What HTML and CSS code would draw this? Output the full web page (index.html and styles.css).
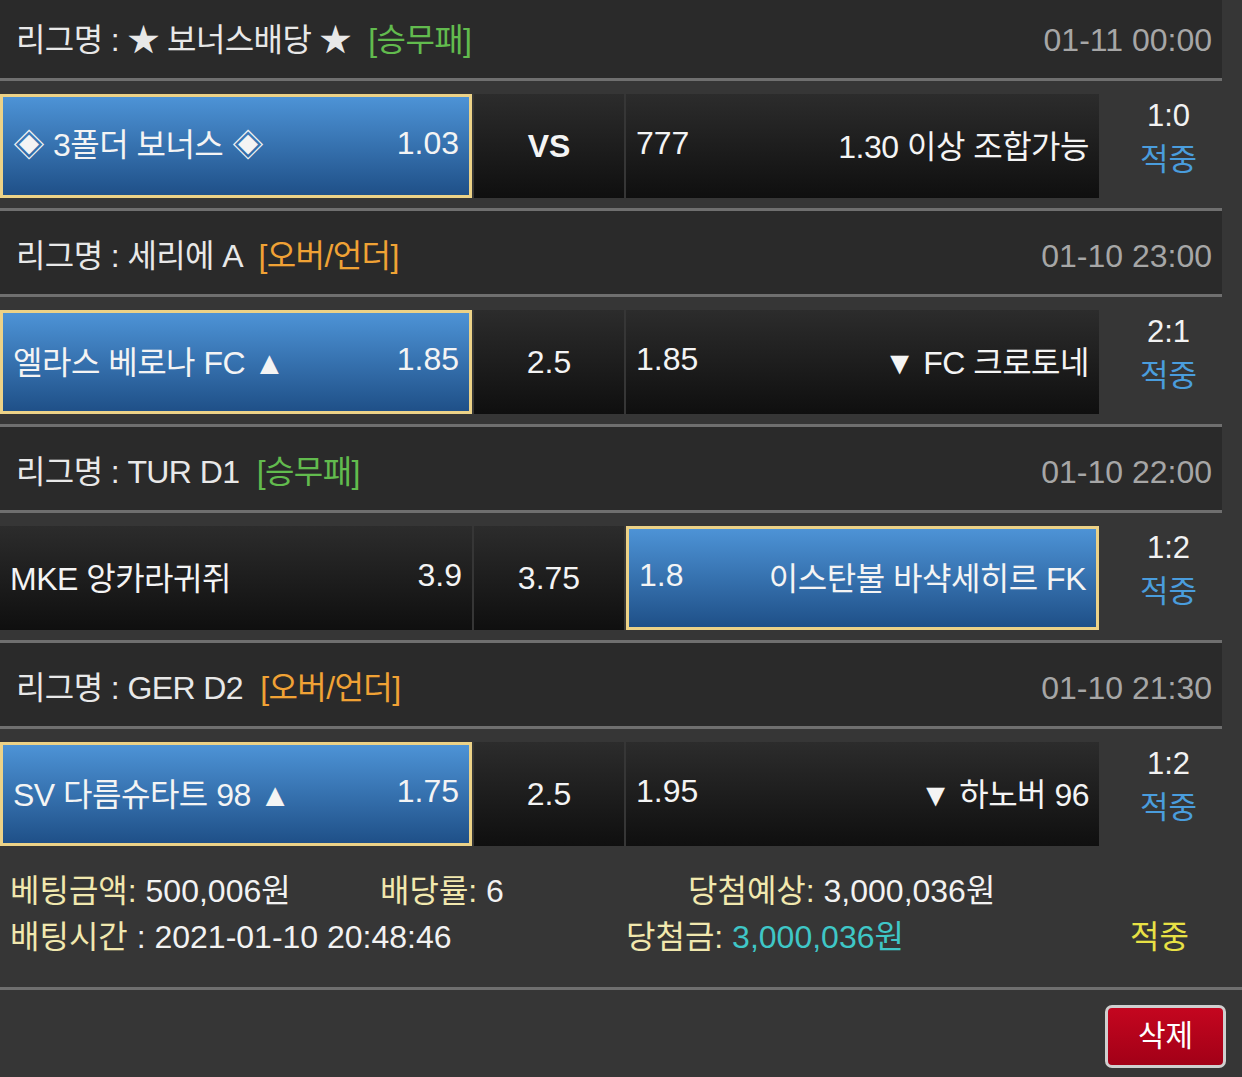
FILE: index.html
```html
<!DOCTYPE html>
<html lang="ko">
<head>
    <meta charset="UTF-8">
    <meta name="viewport" content="width=device-width, initial-scale=1.0">
    <title>배팅내역</title>
    <link rel="stylesheet" href="styles.css">
</head>
<body>
    <div class="bet-list">
        <!-- 보너스 -->
        <div class="league">
            <div class="league-name">리그명 : ★ 보너스배당 ★ <span class="tag green">[승무패]</span></div>
            <div class="league-time">01-11 00:00</div>
        </div>
        <div class="match">
            <div class="pick selected"><span class="team">◈ 3폴더 보너스 ◈</span><span>1.03</span></div>
            <div class="pick draw"><b>VS</b></div>
            <div class="pick"><span>777</span><span class="team">1.30 이상 조합가능</span></div>
            <div class="result"><div>1:0</div><div class="hit">적중</div></div>
        </div>

        <!-- 세리에 A -->
        <div class="league">
            <div class="league-name">리그명 : 세리에 A <span class="tag orange">[오버/언더]</span></div>
            <div class="league-time">01-10 23:00</div>
        </div>
        <div class="match">
            <div class="pick selected"><span class="team">엘라스 베로나 FC ▲</span><span>1.85</span></div>
            <div class="pick draw">2.5</div>
            <div class="pick"><span>1.85</span><span class="team">▼ FC 크로토네</span></div>
            <div class="result"><div>2:1</div><div class="hit">적중</div></div>
        </div>

        <!-- TUR D1 -->
        <div class="league">
            <div class="league-name">리그명 : TUR D1 <span class="tag green">[승무패]</span></div>
            <div class="league-time">01-10 22:00</div>
        </div>
        <div class="match">
            <div class="pick"><span class="team">MKE 앙카라귀쥐</span><span>3.9</span></div>
            <div class="pick draw">3.75</div>
            <div class="pick selected"><span>1.8</span><span class="team">이스탄불 바샥세히르 FK</span></div>
            <div class="result"><div>1:2</div><div class="hit">적중</div></div>
        </div>

        <!-- GER D2 -->
        <div class="league">
            <div class="league-name">리그명 : GER D2 <span class="tag orange">[오버/언더]</span></div>
            <div class="league-time">01-10 21:30</div>
        </div>
        <div class="match last">
            <div class="pick selected"><span class="team">SV 다름슈타트 98 ▲</span><span>1.75</span></div>
            <div class="pick draw">2.5</div>
            <div class="pick"><span>1.95</span><span class="team">▼ 하노버 96</span></div>
            <div class="result"><div>1:2</div><div class="hit">적중</div></div>
        </div>
    </div>

    <div class="summary">
        <div class="summary-row">
            <div class="col-amount"><span class="label">베팅금액:</span> 500,006원</div>
            <div class="col-rate"><span class="label">배당률:</span> 6</div>
            <div><span class="label">당첨예상:</span> 3,000,036원</div>
        </div>
        <div class="summary-row">
            <div class="col-time"><span class="label">배팅시간</span> : 2021-01-10 20:48:46</div>
            <div class="col-win"><span class="label">당첨금:</span> <span class="win-amount">3,000,036원</span></div>
            <div class="status">적중</div>
        </div>
    </div>

    <div class="actions">
        <button class="btn-delete">삭제</button>
    </div>
</body>
</html>
```

FILE: styles.css
```css
body {
    font-family: "Liberation Sans", "Noto Sans CJK KR", sans-serif;
    background-color: #363636;
    color: #f2f2f2;
    margin: 0;
    font-size: 32px;
}

.bet-list {
    width: 1222px;
    margin-top: -5px;
}

.league {
    height: 77px;
    background-color: #2a2a2a;
    border-bottom: 3px solid #6f6f6f;
    display: flex;
    align-items: center;
    justify-content: space-between;
    padding: 6px 10px 0 16px;
    line-height: 40px;
}

.league-name {
    color: #e8e8e8;
    letter-spacing: -0.6px;
}

.tag {
    margin-left: 9px;
}

.green {
    color: #62bb4e;
}

.orange {
    color: #f0a235;
}

.league-time {
    color: #a6a6a6;
}

.match {
    display: grid;
    grid-template-columns: 472px 150px 473px 1fr;
    column-gap: 2px;
    padding: 13px 0 10px;
    border-bottom: 3px solid #6f6f6f;
}

.match.last {
    border-bottom: none;
}

.pick {
    height: 104px;
    box-sizing: border-box;
    display: flex;
    align-items: center;
    justify-content: space-between;
    padding: 0 10px 5px;
    background: linear-gradient(#2c2c2c, #0f0f0f);
    color: #f4f4f4;
    white-space: nowrap;
}

.team {
    letter-spacing: -0.5px;
}

.pick.selected {
    border: 3px solid #ecd287;
    background: linear-gradient(#4d93d6, #1f5088);
}

.pick.draw {
    justify-content: center;
    padding: 0;
}

.result {
    height: 104px;
    box-sizing: border-box;
    display: flex;
    flex-direction: column;
    justify-content: center;
    align-items: center;
    line-height: 44px;
    font-size: 31px;
    padding: 0 0 16px 14px;
}

.hit {
    color: #4a9ddd;
}

.summary {
    padding: 12px 0 27px 10px;
    border-bottom: 3px solid #6f6f6f;
    line-height: 46px;
}

.summary-row {
    display: flex;
    white-space: nowrap;
}

.label {
    color: #f1e8ae;
}

.col-amount {
    width: 370px;
}

.col-rate {
    width: 308px;
}

.col-time {
    width: 616px;
}

.col-win {
    width: 504px;
}

.win-amount {
    color: #3fc7c7;
}

.status {
    color: #e8e145;
}

.actions {
    display: flex;
    justify-content: flex-end;
    padding: 15px 16px 0 0;
}

.btn-delete {
    width: 121px;
    height: 63px;
    border: 3px solid #cfcfcf;
    border-radius: 7px;
    background: linear-gradient(#c4061f, #a20017);
    color: #ffffff;
    font-family: "Liberation Sans", "Noto Sans CJK KR", sans-serif;
    font-size: 30px;
    padding: 0 0 8px;
}
```
